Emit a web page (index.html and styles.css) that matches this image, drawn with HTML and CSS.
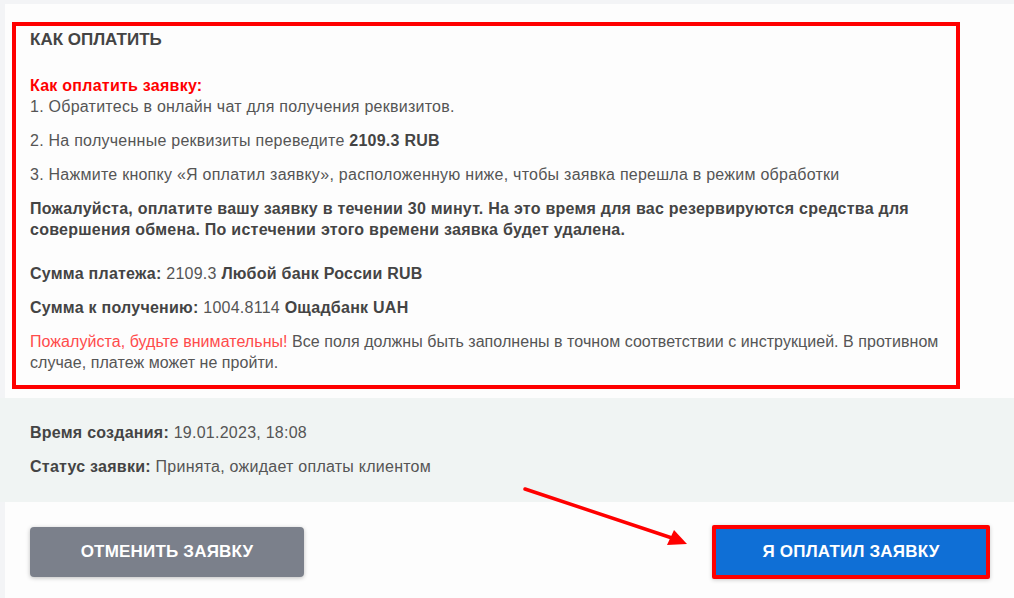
FILE: index.html
```html
<!DOCTYPE html>
<html lang="ru">
<head>
<meta charset="utf-8">
<title>Как оплатить</title>
<link rel="stylesheet" href="styles.css">
</head>
<body>
<div class="page">
  <section class="panel top">
    <div class="howto">
      <h2 class="title">КАК ОПЛАТИТЬ</h2>
      <p class="first"><b class="red">Как оплатить заявку:</b><br>1. Обратитесь в онлайн чат для получения реквизитов.</p>
      <p>2. На полученные реквизиты переведите <b>2109.3 RUB</b></p>
      <p>3. Нажмите кнопку «Я оплатил заявку», расположенную ниже, чтобы заявка перешла в режим обработки</p>
      <p class="warn-bold"><b>Пожалуйста, оплатите вашу заявку в течении 30 минут. На это время для вас резервируются средства для совершения обмена. По истечении этого времени заявка будет удалена.</b></p>
      <p><b>Сумма платежа:</b> 2109.3 <b>Любой банк России RUB</b></p>
      <p><b>Сумма к получению:</b> 1004.8114 <b>Ощадбанк UAH</b></p>
      <p class="last"><span class="pink">Пожалуйста, будьте внимательны!</span> Все поля должны быть заполнены в точном соответствии с инструкцией. В противном случае, платеж может не пройти.</p>
    </div>
  </section>
  <section class="info">
    <p><b>Время создания:</b> 19.01.2023, 18:08</p>
    <p><b>Статус заявки:</b> Принята, ожидает оплаты клиентом</p>
  </section>
  <section class="panel actions">
    <button class="btn cancel">ОТМЕНИТЬ ЗАЯВКУ</button>
    <button class="btn pay">Я ОПЛАТИЛ ЗАЯВКУ</button>
  </section>
  <svg class="arrow" width="180" height="70" viewBox="0 0 180 70">
    <line x1="2" y1="2" x2="152" y2="52" stroke="#f00" stroke-width="3.5" stroke-linecap="round"/>
    <polygon points="164,57 144,58 151,43" fill="#f00"/>
  </svg>
</div>
</body>
</html>
```
FILE: styles.css
```css
* { box-sizing: border-box; }
html, body { margin: 0; padding: 0; }
body {
  background: #f3f4f6;
  font-family: "Liberation Sans", Arial, sans-serif;
  font-size: 16px;
  color: #555;
  width: 1014px;
  height: 598px;
  overflow: hidden;
}
.page {
  position: relative;
  padding-top: 4px;
}
.panel {
  background: #fdfdfd;
  margin-left: 5px;
}
.top {
  padding: 18px 54px 9px 7px;
}
.howto {
  border: 4px solid #f00;
  padding: 4px 6px 12px 14px;
  line-height: 21px;
  letter-spacing: 0.25px;
}
.title {
  margin: 0;
  font-size: 17px;
  line-height: 20px;
  font-weight: bold;
  color: #444;
  letter-spacing: 0;
}
.howto p {
  margin: 0 0 13px;
}
.howto p.first { margin-top: 25px; }
.howto p.last { margin-bottom: 0; letter-spacing: 0.05px; }
.howto p.warn-bold { margin-bottom: 23px; }
b { color: #444; }
b.red { color: #f00; }
.pink { color: #ff4b4b; }
.info {
  background: #f0f4f3;
  padding: 24px 30px 25px;
  line-height: 21px;
  letter-spacing: 0.25px;
}
.info p { margin: 0 0 13px; }
.info p:last-child { margin-bottom: 0; }
.actions {
  display: flex;
  justify-content: space-between;
  align-items: center;
  padding: 23px 24px 20px 25px;
}
.btn {
  border: none;
  font-family: "Liberation Sans", Arial, sans-serif;
  font-weight: bold;
  font-size: 17px;
  color: #fff;
  cursor: pointer;
}
.cancel {
  width: 274px;
  height: 50px;
  background: #7b808b;
  border-radius: 4px;
  box-shadow: 0 1px 4px rgba(0,0,0,0.25);
  letter-spacing: 0.2px;
}
.pay {
  width: 278px;
  height: 54px;
  background: #0f6fd6;
  border: 4px solid #f00;
  border-radius: 2px;
  box-shadow: 0 1px 4px rgba(0,0,0,0.2);
  letter-spacing: 0.2px;
}
.arrow {
  position: absolute;
  left: 523px;
  top: 487px;
}
```
